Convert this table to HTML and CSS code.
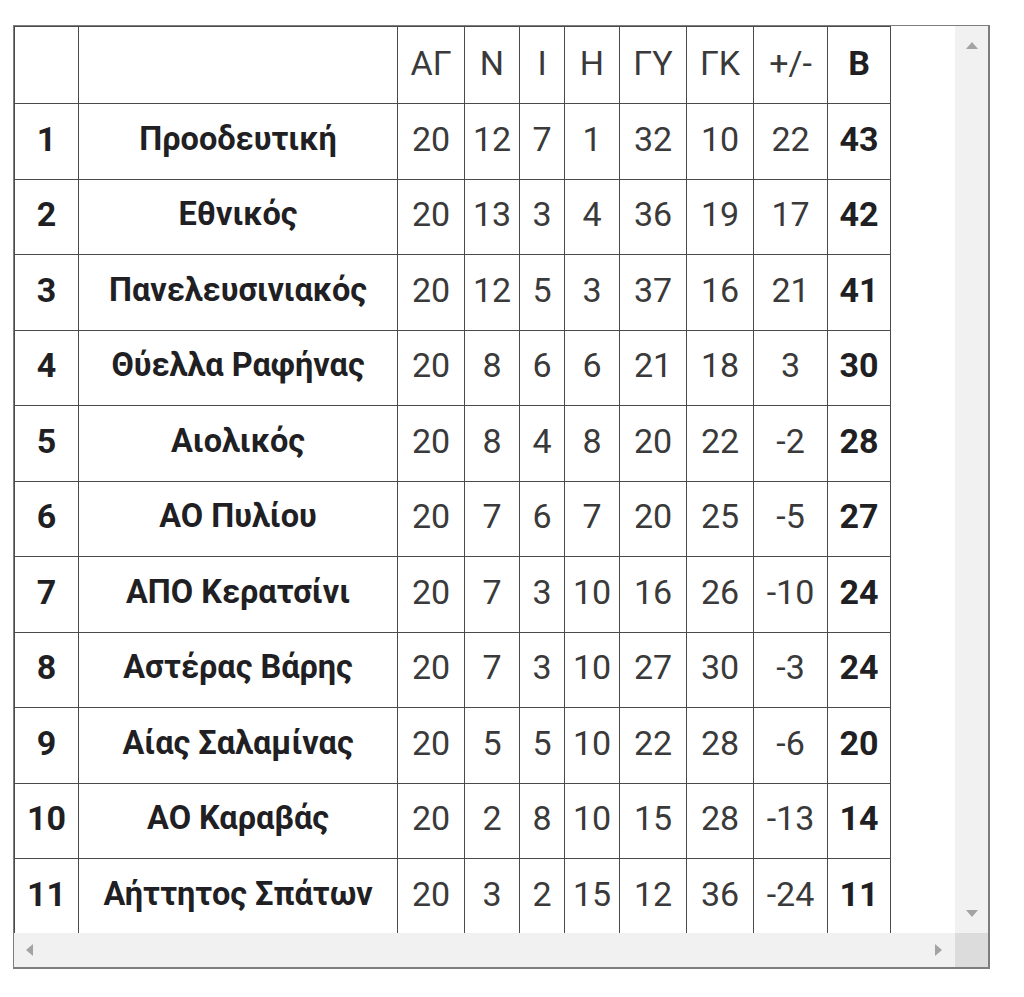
FILE: index.html
```html
<!DOCTYPE html>
<html lang="el">
<head>
<meta charset="utf-8">
<title>Βαθμολογία</title>
<link rel="stylesheet" href="styles.css">
</head>
<body>
<div class="page">
  <div class="box">
    <div class="content">
      <table class="standings">
        <colgroup>
          <col class="c-pos"><col class="c-team"><col class="c-ag"><col class="c-n"><col class="c-i"><col class="c-h"><col class="c-gy"><col class="c-gk"><col class="c-diff"><col class="c-b">
        </colgroup>
        <thead>
          <tr class="head"><th></th><th></th><th>ΑΓ</th><th>Ν</th><th>Ι</th><th>Η</th><th>ΓΥ</th><th>ΓΚ</th><th>+/-</th><th class="b">Β</th></tr>
        </thead>
        <tbody>
          <tr><td class="b">1</td><td class="b team">Προοδευτική</td><td>20</td><td>12</td><td>7</td><td>1</td><td>32</td><td>10</td><td>22</td><td class="b">43</td></tr>
          <tr><td class="b">2</td><td class="b team">Εθνικός</td><td>20</td><td>13</td><td>3</td><td>4</td><td>36</td><td>19</td><td>17</td><td class="b">42</td></tr>
          <tr><td class="b">3</td><td class="b team">Πανελευσινιακός</td><td>20</td><td>12</td><td>5</td><td>3</td><td>37</td><td>16</td><td>21</td><td class="b">41</td></tr>
          <tr><td class="b">4</td><td class="b team">Θύελλα Ραφήνας</td><td>20</td><td>8</td><td>6</td><td>6</td><td>21</td><td>18</td><td>3</td><td class="b">30</td></tr>
          <tr><td class="b">5</td><td class="b team">Αιολικός</td><td>20</td><td>8</td><td>4</td><td>8</td><td>20</td><td>22</td><td>-2</td><td class="b">28</td></tr>
          <tr><td class="b">6</td><td class="b team">ΑΟ Πυλίου</td><td>20</td><td>7</td><td>6</td><td>7</td><td>20</td><td>25</td><td>-5</td><td class="b">27</td></tr>
          <tr><td class="b">7</td><td class="b team">ΑΠΟ Κερατσίνι</td><td>20</td><td>7</td><td>3</td><td>10</td><td>16</td><td>26</td><td>-10</td><td class="b">24</td></tr>
          <tr><td class="b">8</td><td class="b team">Αστέρας Βάρης</td><td>20</td><td>7</td><td>3</td><td>10</td><td>27</td><td>30</td><td>-3</td><td class="b">24</td></tr>
          <tr><td class="b">9</td><td class="b team">Αίας Σαλαμίνας</td><td>20</td><td>5</td><td>5</td><td>10</td><td>22</td><td>28</td><td>-6</td><td class="b">20</td></tr>
          <tr><td class="b">10</td><td class="b team">ΑΟ Καραβάς</td><td>20</td><td>2</td><td>8</td><td>10</td><td>15</td><td>28</td><td>-13</td><td class="b">14</td></tr>
          <tr><td class="b">11</td><td class="b team">Αήττητος Σπάτων</td><td>20</td><td>3</td><td>2</td><td>15</td><td>12</td><td>36</td><td>-24</td><td class="b">11</td></tr>
        </tbody>
      </table>
    </div>
    <div class="vbar">
      <span class="arrow up"></span>
      <span class="arrow down"></span>
    </div>
    <div class="hbar">
      <span class="arrow left"></span>
      <span class="arrow right"></span>
    </div>
    <div class="corner"></div>
  </div>
</div>
</body>
</html>
```

FILE: styles.css
```css
html, body {
  margin: 0;
  padding: 0;
  background: #ffffff;
}

.page {
  padding: 25px 0 0 13px;
}

.box {
  display: grid;
  grid-template-columns: 941px 33px;
  grid-template-rows: 907px 34px;
  width: 974px;
  border: 1px solid #7d7d7d;
  border-right-width: 2px;
  border-bottom-width: 2px;
  background: #ffffff;
}

.content {
  overflow: hidden;
}

.standings {
  border-collapse: collapse;
  table-layout: fixed;
  width: 876px;
  font-family: Roboto, "Liberation Sans", Arial, sans-serif;
  font-size: 34px;
  color: #3a3a3a;
}

.standings th,
.standings td {
  border: 1px solid #4a4a4a;
  padding: 0 0 5px 0;
  text-align: center;
  vertical-align: middle;
  font-weight: 400;
  white-space: nowrap;
}

.standings tr {
  height: 75.5px;
}

.standings tr.head {
  height: 77px;
}

.standings .b {
  font-weight: 700;
  color: #1f1f24;
}

.standings .team {
  font-size: 32.5px;
}

.c-pos { width: 64px; }
.c-team { width: 319px; }
.c-ag { width: 67px; }
.c-n { width: 55px; }
.c-i { width: 45px; }
.c-h { width: 55px; }
.c-gy { width: 67px; }
.c-gk { width: 67px; }
.c-diff { width: 74px; }
.c-b { width: 63px; }

.vbar {
  background: #f1f1f1;
  display: flex;
  flex-direction: column;
  justify-content: space-between;
  align-items: center;
  padding: 16px 0 16px;
}

.hbar {
  background: #f1f1f1;
  display: flex;
  justify-content: space-between;
  align-items: center;
  padding: 0 13px 0 12px;
}

.corner {
  background: #dcdcdc;
}

.arrow {
  display: block;
  width: 0;
  height: 0;
}

.arrow.up {
  border-left: 6px solid transparent;
  border-right: 6px solid transparent;
  border-bottom: 7px solid #a3a3a3;
}

.arrow.down {
  border-left: 6px solid transparent;
  border-right: 6px solid transparent;
  border-top: 7px solid #a3a3a3;
}

.arrow.left {
  border-top: 6px solid transparent;
  border-bottom: 6px solid transparent;
  border-right: 7px solid #a3a3a3;
}

.arrow.right {
  border-top: 6px solid transparent;
  border-bottom: 6px solid transparent;
  border-left: 7px solid #a3a3a3;
}
```
